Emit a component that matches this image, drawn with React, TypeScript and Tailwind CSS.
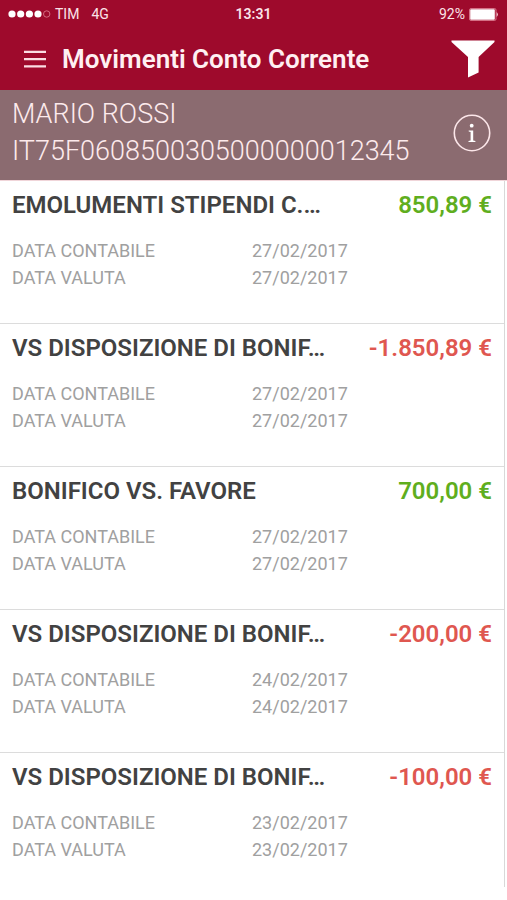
import React from 'react';

interface Movement {
  id: number;
  title: string;
  amount: string;
  bookingDate: string;
  valueDate: string;
}

const movements: Movement[] = [
  { id: 1, title: 'EMOLUMENTI STIPENDI C.…', amount: '850,89 €', bookingDate: '27/02/2017', valueDate: '27/02/2017' },
  { id: 2, title: 'VS DISPOSIZIONE DI BONIF…', amount: '-1.850,89 €', bookingDate: '27/02/2017', valueDate: '27/02/2017' },
  { id: 3, title: 'BONIFICO VS. FAVORE', amount: '700,00 €', bookingDate: '27/02/2017', valueDate: '27/02/2017' },
  { id: 4, title: 'VS DISPOSIZIONE DI BONIF…', amount: '-200,00 €', bookingDate: '24/02/2017', valueDate: '24/02/2017' },
  { id: 5, title: 'VS DISPOSIZIONE DI BONIF…', amount: '-100,00 €', bookingDate: '23/02/2017', valueDate: '23/02/2017' }
];

const StatusBar: React.FC = () => (
  <div className="grid grid-cols-[1fr_auto_1fr] items-center h-7 px-2 text-sm text-[#fbe3e8]">
    <div className="flex items-center">
      <svg width="43" height="8" viewBox="0 0 43 8" className="mr-1" aria-hidden="true">
        <circle cx="4" cy="4" r="3.6" fill="#fff" />
        <circle cx="12.7" cy="4" r="3.6" fill="#fff" />
        <circle cx="21.4" cy="4" r="3.6" fill="#fff" />
        <circle cx="30" cy="4" r="3.6" fill="#fff" />
        <circle cx="38.7" cy="4" r="3.2" fill="none" stroke="#d9768b" strokeWidth="0.9" />
      </svg>
      <span className="mr-3">TIM</span>
      <span>4G</span>
    </div>
    <span className="font-semibold">13:31</span>
    <div className="flex items-center justify-end gap-1">
      <span>92%</span>
      <svg width="30" height="13" viewBox="0 0 30 13" aria-hidden="true">
        <rect x="0.5" y="0.5" width="26.5" height="12" rx="1.5" fill="none" stroke="#e28a9c" strokeWidth="0.8" />
        <rect x="1.2" y="1.2" width="24.6" height="10.6" rx="0.8" fill="#fff" />
        <path d="M27.6 4 Q30.2 6.5 27.6 9 Z" fill="#f6ccd4" />
      </svg>
    </div>
  </div>
);

const MovementRow: React.FC<{ movement: Movement }> = ({ movement }) => {
  const amountColor = movement.amount.startsWith('-') ? 'text-[#df5750]' : 'text-[#5fae1e]';

  return (
    <li className="px-3 pt-2 pb-8 border-b border-[#dcdcdc] last:border-b-0 last:pb-6">
      <div className="flex items-center justify-between text-2xl leading-8 font-semibold whitespace-nowrap">
        <h2 className="text-[#424242]">{movement.title}</h2>
        <span className={amountColor}>{movement.amount}</span>
      </div>
      <dl className="mt-4 grid grid-cols-2 text-lg leading-[27px] text-[#a0a0a0]">
        <dt>DATA CONTABILE</dt>
        <dd>{movement.bookingDate}</dd>
        <dt>DATA VALUTA</dt>
        <dd>{movement.valueDate}</dd>
      </dl>
    </li>
  );
};

export default function App() {
  return (
    <div className="min-h-screen bg-white font-['Roboto',sans-serif]">
      <header className="bg-[#9e0a2c]">
        <StatusBar />
        <div className="flex items-center h-[62px] pl-6 pr-3">
          <button type="button" aria-label="Menu" className="mr-4">
            <svg width="22" height="18" viewBox="0 0 22 18" fill="none" stroke="#fbdde3" strokeWidth="2.2">
              <path d="M0 1.8h22M0 9.2h22M0 16.4h22" />
            </svg>
          </button>
          <h1 className="flex-1 text-[26px] leading-8 font-semibold text-[#fff0f2]">Movimenti Conto Corrente</h1>
          <button type="button" aria-label="Filtra">
            <svg width="44" height="38" viewBox="0 0 44 38" fill="#fff">
              <path d="M0.5 0.5H43.5V2L27.6 17V32.5L17 37.5V17L0.5 2Z" />
            </svg>
          </button>
        </div>
      </header>

      <section className="flex items-center justify-between pl-3 pr-4 pt-1.5 pb-2.5 bg-[#8b6b70] text-[#fdeaec] border-b border-[#f0d5d9]">
        <div className="text-[27px] leading-[37px] font-light">
          <p>MARIO ROSSI</p>
          <p>IT75F0608500305000000012345</p>
        </div>
        <button type="button" aria-label="Informazioni">
          <svg width="38" height="38" viewBox="0 0 38 38" fill="none">
            <circle cx="19" cy="19" r="17.7" stroke="#fce6e9" strokeWidth="1.6" />
            <circle cx="18.7" cy="11.7" r="1.9" fill="#fff" />
            <path d="M15.7 16.5H20.2V26.4L22.4 27V28H15.5V27L17.6 26.4V18L15.7 17.4Z" fill="#fff" />
          </svg>
        </button>
      </section>

      <main className="mr-0.5 border-r border-[#d8d8d8]">
        <ul>
          {movements.map((movement) => (
            <MovementRow key={movement.id} movement={movement} />
          ))}
        </ul>
      </main>
    </div>
  );
}
